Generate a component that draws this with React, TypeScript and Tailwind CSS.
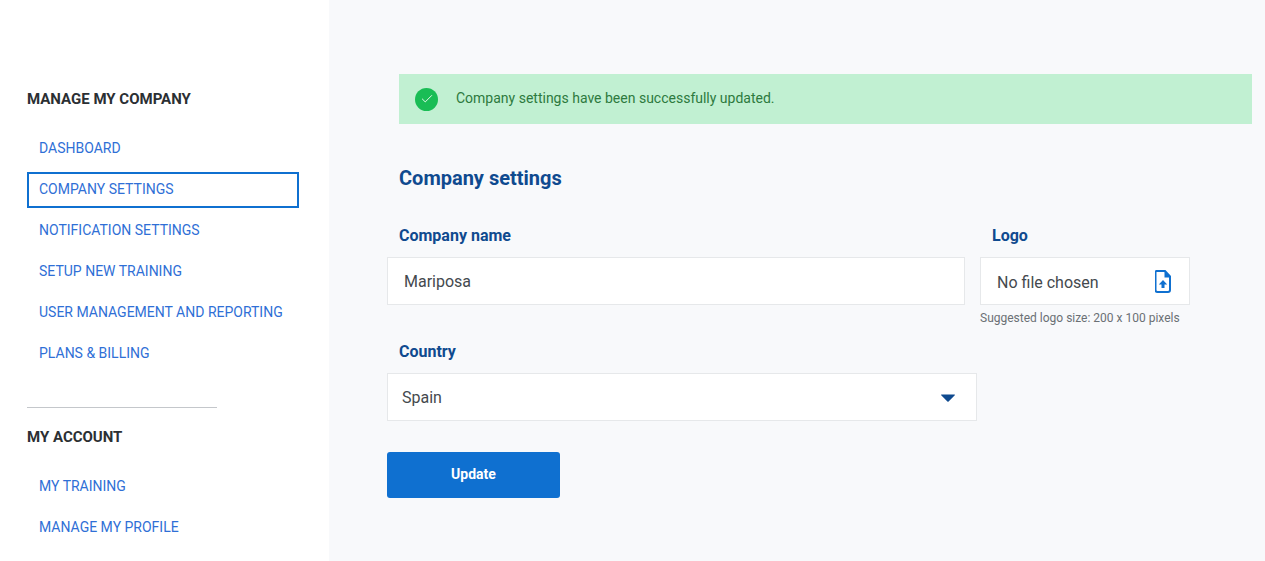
import { Check } from "lucide-react";

const companyLinks = [
  "DASHBOARD",
  "COMPANY SETTINGS",
  "NOTIFICATION SETTINGS",
  "SETUP NEW TRAINING",
  "USER MANAGEMENT AND REPORTING",
  "PLANS & BILLING",
];

const accountLinks = ["MY TRAINING", "MANAGE MY PROFILE"];

function NavLink({ label, active }: { label: string; active?: boolean }) {
  return (
    <a
      className={
        "flex h-9 w-[272px] items-center border-2 px-2.5 pb-0.5 text-sm text-[#2f6fd6] " +
        (active ? "border-[#0f70d0]" : "border-transparent")
      }
    >
      {label}
    </a>
  );
}

function Sidebar() {
  return (
    <aside className="h-full w-[329px] shrink-0 overflow-hidden bg-white pl-[27px] pt-[89px]">
      <h2 className="text-[15px] leading-5 font-bold text-[#2b2f33]">MANAGE MY COMPANY</h2>
      <nav className="mt-[22px] flex flex-col gap-[5px]">
        {companyLinks.map((l) => (
          <NavLink key={l} label={l} active={l === "COMPANY SETTINGS"} />
        ))}
      </nav>
      <div className="mt-[35px] h-px w-[190px] bg-[#c4c7cb]" />
      <h2 className="mt-[19px] text-[15px] leading-5 font-bold text-[#2b2f33]">MY ACCOUNT</h2>
      <nav className="mt-[22px] flex flex-col gap-[5px]">
        {accountLinks.map((l) => (
          <NavLink key={l} label={l} />
        ))}
      </nav>
    </aside>
  );
}

function FileIcon() {
  return (
    <svg width="16" height="23" viewBox="0 0 16 23" fill="none">
      <path
        d="M2.500 1h7.500l5 5.500v13.500a2 2 0 0 1-2 2h-10.500a2 2 0 0 1-2-2v-17.500a2 2 0 0 1 2-2z"
        stroke="#0f70d0"
        strokeWidth="2"
      />
      <path d="M9.500 1v6.500h5.500z" fill="#0f70d0" />
      <path d="M8 10l4.200 4.500h-2.700v3.500h-3v-3.500h-2.700z" fill="#0f70d0" />
    </svg>
  );
}

export default function App() {
  return (
    <div className="flex h-[561px] w-[1265px] overflow-hidden bg-[#f8f9fb] font-['Roboto',sans-serif]">
      <Sidebar />
      <main className="flex-1 pl-[58px] pt-[74px]">
        <div className="ml-3 flex h-[50px] w-[853px] items-center bg-[#c1f0d2] pl-4 text-sm text-[#2d7a3e]">
          <span className="flex h-[23px] w-[23px] items-center justify-center rounded-full bg-[#19bd55]">
            <Check size={14} color="white" strokeWidth={1.5} />
          </span>
          <span className="mb-0.5 ml-[18px]">Company settings have been successfully updated.</span>
        </div>

        <h1 className="ml-3 mt-10 text-xl leading-7 font-bold text-[#0f4a8f]">Company settings</h1>

        <div className="mt-[31px] flex gap-[15px]">
          <div className="w-[578px]">
            <label className="ml-3 block pt-px text-base leading-6 font-bold text-[#0f4a8f]">Company name</label>
            <div className="mt-[9px] flex h-12 items-center border border-[#e6e8ea] bg-white pl-4 pt-0.5 text-base text-[#44494e]">
              Mariposa
            </div>
          </div>
          <div className="w-[210px]">
            <label className="ml-3 block pt-px text-base leading-6 font-bold text-[#0f4a8f]">Logo</label>
            <div className="mt-[9px] flex h-12 items-center justify-between border border-[#e6e8ea] bg-white pl-4 pr-[18px] text-base text-[#44494e]">
              <span className="mt-1">No file chosen</span>
              <FileIcon />
            </div>
            <p className="mt-[5px] whitespace-nowrap text-xs text-[#6b7075]">Suggested logo size: 200 x 100 pixels</p>
          </div>
        </div>

        <div className="mt-[13px] w-[590px]">
          <label className="ml-3 block pt-px text-base leading-6 font-bold text-[#0f4a8f]">Country</label>
          <div className="mt-[9px] flex h-12 items-center justify-between border border-[#e6e8ea] bg-white pl-3.5 pr-[21px] pt-0.5 text-base text-[#44494e]">
            Spain
            <svg width="14" height="8" viewBox="0 0 14 8">
              <path d="M0.500 0.500h13a0.500 0.500 0 0 1 .3.800l-6.200 6.200a0.800 0.800 0 0 1-1.200 0l-6.200-6.200a0.500 0.500 0 0 1 .3-.800z" fill="#0f4a8f" />
            </svg>
          </div>
        </div>

        <button className="mt-[31px] h-[46px] w-[173px] rounded-[3px] bg-[#0f70d0] pb-0.5 text-sm font-bold text-white">
          Update
        </button>
      </main>
    </div>
  );
}
